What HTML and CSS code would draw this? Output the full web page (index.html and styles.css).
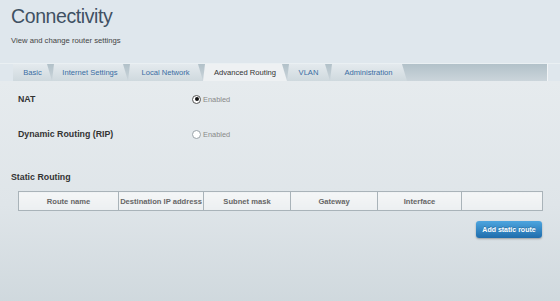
FILE: index.html
```html
<!DOCTYPE html>
<html lang="en">
<head>
    <meta charset="UTF-8">
    <title>Connectivity</title>
    <link rel="stylesheet" href="styles.css">
</head>
<body>
    <header class="page-head">
        <h1>Connectivity</h1>
        <p>View and change router settings</p>
    </header>

    <nav class="tabs">
        <a class="tab">Basic</a>
        <a class="tab">Internet Settings</a>
        <a class="tab">Local Network</a>
        <a class="tab active">Advanced Routing</a>
        <a class="tab">VLAN</a>
        <a class="tab">Administration</a>
    </nav>

    <main class="panel">
        <div class="setting">
            <span class="setting-label">NAT</span>
            <label class="option"><span class="radio checked"></span>Enabled</label>
        </div>
        <div class="setting">
            <span class="setting-label">Dynamic Routing (RIP)</span>
            <label class="option"><span class="radio"></span>Enabled</label>
        </div>

        <h2>Static Routing</h2>
        <table class="routes">
            <thead>
                <tr>
                    <th>Route name</th>
                    <th>Destination IP address</th>
                    <th>Subnet mask</th>
                    <th>Gateway</th>
                    <th>Interface</th>
                    <th></th>
                </tr>
            </thead>
        </table>
        <div class="actions">
            <button class="btn-primary">Add static route</button>
        </div>
    </main>
</body>
</html>
```

FILE: styles.css
```css
body { margin: 0; font-family: "Liberation Sans", Arial, sans-serif; background: #dfe7ed; color: #333; }

.page-head { height: 64px; box-sizing: border-box; padding: 5px 11px 0; border-bottom: 1px solid #eaf0f3; }
.page-head h1 { margin: 0; font-size: 19.5px; line-height: 22px; font-weight: normal; letter-spacing: -0.4px; color: #3f5163; }
.page-head p { margin: 9px 0 0; font-size: 7.7px; color: #444; }

.tabs { display: grid; grid-template-columns: 39px 76px 75px 84px 43px 77px 1fr; height: 17px; margin: 0 12px 0 13px; background: linear-gradient(#b2c1c9, #cbd5db); border-right: 1px solid #f2f5f7; }
.tab { display: flex; align-items: center; justify-content: center; font-size: 7.6px; color: #3a6da3; background: linear-gradient(#e4eaee, #cfd9de); clip-path: polygon(0 100%, 2px 0, calc(100% - 5px) 0, 100% 100%); }
.tab:first-child { clip-path: polygon(0 100%, 0 0, calc(100% - 5px) 0, 100% 100%); }
.tab.active { color: #333; background: #eef1f3; }

.panel { min-height: 218px; padding: 7px 17px 0 11px; background: linear-gradient(#e6ebee, #dfe5e9 55%, #cfd8dd); }

.setting { display: flex; align-items: center; height: 22px; padding-left: 7px; margin-bottom: 13px; }
.setting-label { width: 174px; font-size: 8.8px; font-weight: bold; color: #333; }
.option { display: flex; align-items: center; gap: 2px; font-size: 7.4px; color: #888; }
.radio { width: 7px; height: 7px; border-radius: 50%; border: 1px solid #9aa3a9; background: #fff; position: relative; }
.radio.checked { border-color: #555; }
.radio.checked::after { content: ""; position: absolute; left: 1.5px; top: 1.5px; width: 4px; height: 4px; border-radius: 50%; background: #111; }

.panel h2 { margin: 26px 0 0; font-size: 8.8px; line-height: 12px; color: #333; }

.routes { margin: 8px 0 0 7px; width: calc(100% - 7px); border-collapse: collapse; table-layout: fixed; }
.routes th { height: 18px; padding: 0; border: 1px solid #a9b3b9; background: linear-gradient(#f4f6f7, #eceff1); font-size: 7.6px; color: #666; }
.routes th:nth-child(1) { width: 99px; }
.routes th:nth-child(2) { width: 84px; }
.routes th:nth-child(3) { width: 86px; }
.routes th:nth-child(4) { width: 86px; }
.routes th:nth-child(5) { width: 83px; }

.actions { display: flex; justify-content: flex-end; margin-top: 10px; padding-right: 1px; }
.btn-primary { width: 66px; height: 17px; padding: 0; border: none; border-radius: 3px; background: linear-gradient(#4da5df, #1f6dac); color: #fff; font-family: inherit; font-size: 7px; font-weight: bold; box-shadow: 0 1px 2px rgba(0,0,0,0.3); text-shadow: 0 -1px 0 rgba(0,0,0,0.2); }
```
